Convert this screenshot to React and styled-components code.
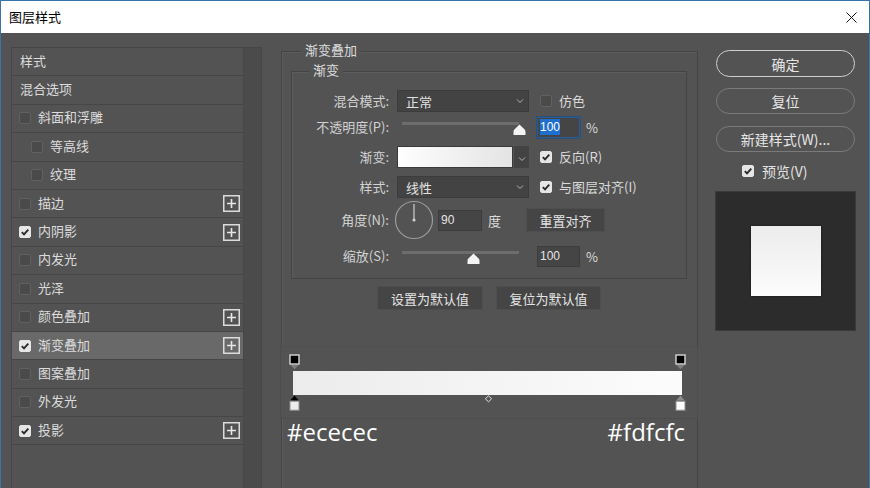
import React from "react";
import styled, { createGlobalStyle } from "styled-components";

const GlobalStyle = createGlobalStyle`
  html, body {
    margin: 0;
    padding: 0;
    background: #535353;
  }
  * { box-sizing: border-box; }
  body {
    font-family: "Noto Sans CJK SC", "Noto Sans", sans-serif;
  }
`;

const Window = styled.div`
  width: 870px;
  height: 488px;
  border: 1px solid #3b72ad;
  border-bottom: none;
  display: flex;
  flex-direction: column;
  overflow: hidden;
  background: #535353;
`;

const TitleBar = styled.div`
  height: 32px;
  flex-shrink: 0;
  background: #ffffff;
  display: flex;
  align-items: center;
  justify-content: space-between;
  padding: 0 12px 0 8px;
  font-size: 13px;
  line-height: 18px;
  color: #000;
`;

const Body = styled.div`
  flex: 1;
  min-height: 0;
  display: flex;
  align-items: flex-start;
`;

/* ---------- left styles list ---------- */

const LeftPanel = styled.div`
  margin: 14px 0 0 10px;
  width: 251px;
  height: 470px;
  border: 1px solid #464646;
  display: flex;
`;

const List = styled.div`
  width: 231px;
  display: flex;
  flex-direction: column;
`;

const ScrollCol = styled.div`
  flex: 1;
  background: #4b4b4b;
  border-left: 1px solid #474747;
`;

const Item = styled.div`
  height: 28.4px;
  flex-shrink: 0;
  display: flex;
  align-items: center;
  gap: 7px;
  padding-left: ${(p) => p.$pad}px;
  padding-right: 3px;
  border-bottom: 1px solid #464646;
  background: ${(p) => (p.$active ? "#696969" : "#535353")};
  font-size: 13px;
  line-height: 18px;
  color: #dcdcdc;
`;

const ItemText = styled.span`
  flex: 1;
  padding-bottom: 2px;
`;

const Box = styled.span`
  width: 12px;
  height: 12px;
  flex-shrink: 0;
  border-radius: 2px;
  border: 1px solid ${(p) => (p.$checked ? "#e6e6e6" : "#616161")};
  background: ${(p) => (p.$checked ? "#e6e6e6" : "#4a4a4a")};
  display: flex;
  align-items: center;
  justify-content: center;
`;

const Check = ({ checked }) => (
  <Box $checked={checked}>
    {checked && (
      <svg width="10" height="10" viewBox="0 0 10 10">
        <path d="M1.8 5.2 L4 7.4 L8.3 2.6" fill="none" stroke="#2a2a2a" strokeWidth="1.9" />
      </svg>
    )}
  </Box>
);

const PlusBox = () => (
  <svg width="17" height="17" viewBox="0 0 17 17">
    <rect x="0.75" y="0.75" width="15.5" height="15.5" fill="none" stroke="#dcdcdc" strokeWidth="1.5" />
    <path d="M8.5 4 V13 M4 8.5 H13" stroke="#e6e6e6" strokeWidth="1.6" />
  </svg>
);

/* ---------- center ---------- */

const Group = styled.div`
  position: relative;
  border: 1px solid #444444;
  box-shadow: inset 1px 1px 0 #5c5c5c;
`;

const Outer = styled(Group)`
  margin: 18px 0 0 19px;
  width: 417px;
  height: 470px;
  padding: 19px 0 0 9px;
`;

const Inner = styled(Group)`
  width: 396px;
  height: 208px;
  padding-top: 18px;
`;

const Legend = styled.span`
  position: absolute;
  top: -11px;
  left: ${(p) => p.$left}px;
  padding: 0 4px;
  background: #535353;
  font-size: 13px;
  line-height: 18px;
  color: #dedede;
`;

const Row = styled.div`
  display: flex;
  align-items: center;
  height: ${(p) => p.$h || 22}px;
  margin-top: ${(p) => p.$mt || 0}px;
`;

const Label = styled.span`
  width: 97px;
  margin-right: 8px;
  text-align: right;
  font-size: 13px;
  line-height: 18px;
  color: #d2d2d2;
  white-space: nowrap;
`;

const Select = styled.div`
  width: ${(p) => p.$w || 132}px;
  height: 22px;
  background: #434343;
  border: 1px solid #3c3c3c;
  display: flex;
  align-items: center;
  justify-content: space-between;
  padding: 0 4px 0 8px;
  font-size: 13px;
  color: #e2e2e2;
`;

const Chevron = () => (
  <svg width="8" height="6" viewBox="0 0 8 6">
    <path d="M1 1.5 L4 4.5 L7 1.5" fill="none" stroke="#b4b4b4" strokeWidth="1" />
  </svg>
);

const Side = styled.div`
  margin-left: 11px;
  display: flex;
  align-items: center;
  gap: 7px;
  font-size: 13px;
  line-height: 18px;
  color: #dadada;
`;

const Slider = styled.div`
  position: relative;
  width: 132px;
  height: 22px;
`;

const Track = styled.div`
  position: absolute;
  left: 5px;
  width: 117px;
  top: 6px;
  height: 3px;
  background: #6d6d6d;
`;

const Thumb = styled.svg`
  position: absolute;
  top: 8px;
  margin-left: -6.5px;
`;

const Field = styled.div`
  width: ${(p) => p.$w || 43}px;
  height: 21px;
  margin-left: ${(p) => p.$ml || 0}px;
  background: #454545;
  border: 1px solid ${(p) => (p.$focus ? "#2a5d96" : "#3c3c3c")};
  box-shadow: ${(p) => (p.$focus ? "0 0 0 1px #2b4f78" : "none")};
  display: flex;
  align-items: center;
  padding-left: 2px;
  font-family: "Liberation Sans", Arial, sans-serif;
  font-size: 12px;
  color: #e4e4e4;
`;

const Selected = styled.span`
  background: #1f6fd1;
  color: #ffffff;
  padding: 1px 0;
`;

const Unit = styled.span`
  margin-left: 6px;
  font-size: 13px;
  color: #dcdcdc;
`;

const Swatch = styled.div`
  width: 116px;
  height: 22px;
  border: 1px solid #3a3a3a;
  background: linear-gradient(to right, #fefefe, #e4e4e4);
`;

const SwatchDrop = styled.div`
  width: 15px;
  height: 22px;
  margin-left: 1px;
  background: #434343;
  display: flex;
  align-items: flex-end;
  justify-content: center;
  padding-bottom: 6px;
`;

const Btn = styled.div`
  width: ${(p) => p.$w}px;
  height: 24px;
  margin-left: ${(p) => p.$ml || 0}px;
  background: #454545;
  border: 1px solid #4e4e4e;
  display: flex;
  align-items: center;
  justify-content: center;
  font-size: 13px;
  color: #e4e4e4;
`;

const ButtonRow = styled.div`
  width: 396px;
  margin-top: 7px;
  display: flex;
  justify-content: center;
  gap: 13px;
`;

const GradEditor = styled.div`
  margin: 36px 0 0 -11px;
  width: 418px;
  height: 73px;
  border: 1px solid #4d4d4d;
  border-top-color: #505050;
  padding: 7px 0 0 12px;
  background: #535353;
`;

const StopTrack = styled.div`
  position: relative;
  width: 389px;
  height: ${(p) => p.$h}px;
`;

const Marker = styled.svg`
  position: absolute;
  top: 0;
  margin-left: -5.5px;
`;

const Bar = styled.div`
  width: 389px;
  height: 24px;
  background: linear-gradient(to right, #ececec, #fdfcfc);
`;

const HexRow = styled.div`
  width: 398px;
  margin: -1px 0 0 -4px;
  display: flex;
  justify-content: space-between;
  font-family: "Open Sans", "Noto Sans", sans-serif;
  font-size: 24px;
  line-height: 28px;
  color: #ffffff;
`;

/* ---------- right column ---------- */

const Right = styled.div`
  margin: 17px 0 0 17px;
  width: 141px;
  display: flex;
  flex-direction: column;
`;

const Pill = styled.div`
  width: 139px;
  height: ${(p) => p.$h || 26}px;
  margin: ${(p) => p.$mt || 0}px 0 0 1px;
  border-radius: 14px;
  border: ${(p) => (p.$primary ? "1.5px solid #cfcfcf" : "1px solid #7a7a7a")};
  display: flex;
  align-items: center;
  justify-content: center;
  font-size: 14px;
  line-height: 18px;
  color: #e6e6e6;
`;

const PreviewRow = styled.div`
  height: 22px;
  margin: 8px 0 0 27px;
  display: flex;
  align-items: center;
  gap: 8px;
  font-size: 14px;
  line-height: 18px;
  color: #e2e2e2;
`;

const PreviewBox = styled.div`
  margin-top: 9px;
  width: 141px;
  height: 140px;
  background: #2c2c2c;
  border: 1px solid #3a3a3a;
  display: flex;
  align-items: center;
  justify-content: center;
`;

const PreviewSwatch = styled.div`
  width: 70px;
  height: 70px;
  background: linear-gradient(to bottom, #ececec, #fdfcfc);
  box-shadow: 0 0 2px rgba(0, 0, 0, 0.6);
`;

const styles = [
  { name: "样式" },
  { name: "混合选项" },
  { name: "斜面和浮雕", box: true },
  { name: "等高线", box: true, indent: true },
  { name: "纹理", box: true, indent: true },
  { name: "描边", box: true, plus: true },
  { name: "内阴影", box: true, checked: true, plus: true },
  { name: "内发光", box: true },
  { name: "光泽", box: true },
  { name: "颜色叠加", box: true, plus: true },
  { name: "渐变叠加", box: true, checked: true, plus: true, active: true },
  { name: "图案叠加", box: true },
  { name: "外发光", box: true },
  { name: "投影", box: true, checked: true, plus: true },
];

const SliderThumb = ({ left }) => (
  <Thumb width="13" height="11" viewBox="0 0 13 11" style={{ left }}>
    <path d="M6.5 0.5 L11.6 5.6 Q12.5 6.6 12.5 8 V11 H0.5 V8 Q0.5 6.6 1.4 5.6 Z" fill="#f4f4f4" />
  </Thumb>
);

const TopStop = ({ left }) => (
  <Marker width="11" height="17" viewBox="0 0 11 17" style={{ left }}>
    <rect x="1" y="1" width="9" height="9" fill="#000" stroke="#d8d8d8" strokeWidth="1.4" />
    <path d="M1.5 11 H9.5 L5.5 15.5 Z" fill="#7e7e7e" />
  </Marker>
);

const BottomStop = ({ left, selected, fill }) => (
  <Marker width="11" height="16" viewBox="0 0 11 16" style={{ left }}>
    <path d="M5.5 0.5 L9.8 5.5 H1.2 Z" fill={selected ? "#000" : "#8c8c8c"} />
    <rect x="1" y="6.2" width="9" height="9" fill={fill} stroke="#8f8f8f" strokeWidth="1" />
  </Marker>
);

const Midpoint = ({ left }) => (
  <Marker width="11" height="8" viewBox="0 0 11 8" style={{ left, top: 0 }}>
    <path d="M5.5 0.8 L8.6 3.8 L5.5 6.8 L2.4 3.8 Z" fill="#535353" stroke="#e4e4e4" strokeWidth="1" />
  </Marker>
);

export default function App() {
  return (
    <>
      <GlobalStyle />
      <Window>
        <TitleBar>
          <span>图层样式</span>
          <svg width="11" height="11" viewBox="0 0 11 11">
            <path d="M0.5 0.5 L10.5 10.5 M10.5 0.5 L0.5 10.5" stroke="#111" strokeWidth="1" />
          </svg>
        </TitleBar>
        <Body>
          <LeftPanel>
            <List>
              {styles.map((s) => (
                <Item
                  key={s.name}
                  $pad={s.indent ? 19 : s.box ? 7 : 8}
                  $active={s.active}
                >
                  {s.box && <Check checked={s.checked} />}
                  <ItemText>{s.name}</ItemText>
                  {s.plus && <PlusBox />}
                </Item>
              ))}
            </List>
            <ScrollCol />
          </LeftPanel>

          <Outer>
            <Legend $left={19}>渐变叠加</Legend>
            <Inner>
              <Legend $left={17}>渐变</Legend>
              <Row>
                <Label>混合模式:</Label>
                <Select>
                  <span>正常</span>
                  <Chevron />
                </Select>
                <Side>
                  <Check />
                  <span>仿色</span>
                </Side>
              </Row>
              <Row $mt={4}>
                <Label>不透明度(P):</Label>
                <Slider>
                  <Track />
                  <SliderThumb left={122} />
                </Slider>
                <Field $focus $ml={8}>
                  <Selected>100</Selected>
                </Field>
                <Unit>%</Unit>
              </Row>
              <Row $mt={8}>
                <Label>渐变:</Label>
                <Swatch />
                <SwatchDrop>
                  <Chevron />
                </SwatchDrop>
                <Side>
                  <Check checked />
                  <span>反向(R)</span>
                </Side>
              </Row>
              <Row $mt={8}>
                <Label>样式:</Label>
                <Select>
                  <span>线性</span>
                  <Chevron />
                </Select>
                <Side>
                  <Check checked />
                  <span>与图层对齐(I)</span>
                </Side>
              </Row>
              <Row $h={40} $mt={2}>
                <Label>角度(N):</Label>
                <svg width="40" height="40" viewBox="0 0 40 40" style={{ marginLeft: -3 }}>
                  <circle cx="20" cy="20" r="18.5" fill="none" stroke="#9c9c9c" strokeWidth="1.2" />
                  <path d="M20 20 V4" stroke="#cfcfcf" strokeWidth="1.2" />
                  <circle cx="20" cy="20" r="1.6" fill="#cfcfcf" />
                </svg>
                <Field $w={44} $ml={4}>90</Field>
                <Unit>度</Unit>
                <Btn $w={79} $ml={25}>重置对齐</Btn>
              </Row>
              <Row $mt={5}>
                <Label>缩放(S):</Label>
                <Slider>
                  <Track />
                  <SliderThumb left={76} />
                </Slider>
                <Field $ml={8}>100</Field>
                <Unit>%</Unit>
              </Row>
            </Inner>
            <ButtonRow>
              <Btn $w={106}>设置为默认值</Btn>
              <Btn $w={105}>复位为默认值</Btn>
            </ButtonRow>
            <GradEditor>
              <StopTrack $h={17}>
                <TopStop left={1} />
                <TopStop left={387} />
              </StopTrack>
              <Bar />
              <StopTrack $h={16}>
                <BottomStop left={1} selected fill="#ececec" />
                <Midpoint left={195} />
                <BottomStop left={387} fill="#ffffff" />
              </StopTrack>
            </GradEditor>
            <HexRow>
              <span>#ececec</span>
              <span>#fdfcfc</span>
            </HexRow>
          </Outer>

          <Right>
            <Pill $primary $h={27}>确定</Pill>
            <Pill $mt={11}>复位</Pill>
            <Pill $mt={12}>新建样式(W)...</Pill>
            <PreviewRow>
              <Check checked />
              <span>预览(V)</span>
            </PreviewRow>
            <PreviewBox>
              <PreviewSwatch />
            </PreviewBox>
          </Right>
        </Body>
      </Window>
    </>
  );
}
